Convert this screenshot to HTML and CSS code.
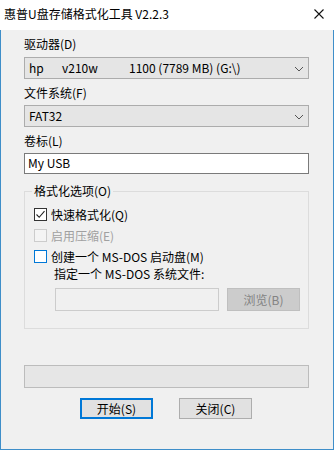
FILE: index.html
```html
<!DOCTYPE html>
<html lang="zh-CN">
<head>
    <meta charset="UTF-8">
    <meta name="viewport" content="width=device-width, initial-scale=1.0">
    <title>惠普U盘存储格式化工具 V2.2.3</title>
    <link rel="stylesheet" href="styles.css">
</head>
<body>
    <div class="window">
        <div class="titlebar">
            <span class="title">惠普U盘存储格式化工具 V2.2.3</span>
            <svg class="close" width="10" height="10" viewBox="0 0 10 10">
                <path d="M0.5 0.5 L9.5 9.5 M9.5 0.5 L0.5 9.5" stroke="#111" stroke-width="1.1" fill="none"/>
            </svg>
        </div>

        <div class="content">
            <div class="field-label first">驱动器(D)</div>
            <div class="combo">
                <span class="combo-text">
                    <span class="col-vendor">hp</span><span class="col-model">v210w</span><span>1100 (7789 MB) (G:\)</span>
                </span>
                <svg class="chevron" width="10" height="6" viewBox="0 0 10 6">
                    <path d="M1 1 L5 5 L9 1" stroke="#555" stroke-width="1" fill="none"/>
                </svg>
            </div>

            <div class="field-label">文件系统(F)</div>
            <div class="combo">
                <span class="combo-text">FAT32</span>
                <svg class="chevron" width="10" height="6" viewBox="0 0 10 6">
                    <path d="M1 1 L5 5 L9 1" stroke="#555" stroke-width="1" fill="none"/>
                </svg>
            </div>

            <div class="field-label">卷标(L)</div>
            <div class="textbox">My USB</div>

            <fieldset class="group">
                <legend>格式化选项(O)</legend>

                <div class="check-row">
                    <span class="checkbox checked">
                        <svg width="11" height="11" viewBox="0 0 11 11">
                            <path d="M1.5 5.5 L4.2 8.3 L9.5 2.2" stroke="#222" stroke-width="1.1" fill="none"/>
                        </svg>
                    </span>
                    <span>快速格式化(Q)</span>
                </div>

                <div class="check-row disabled">
                    <span class="checkbox"></span>
                    <span>启用压缩(E)</span>
                </div>

                <div class="check-row">
                    <span class="checkbox hover"></span>
                    <span>创建一个 MS-DOS 启动盘(M)</span>
                </div>

                <div class="sub-label">指定一个 MS-DOS 系统文件:</div>

                <div class="file-row">
                    <div class="file-input"></div>
                    <div class="btn btn-disabled">浏览(B)</div>
                </div>
            </fieldset>

            <div class="progress"></div>

            <div class="actions">
                <div class="btn btn-default">开始(S)</div>
                <div class="btn">关闭(C)</div>
            </div>
        </div>
    </div>
</body>
</html>
```

FILE: styles.css
```css
* {
    box-sizing: border-box;
}

body {
    margin: 0;
    font-family: "Noto Sans CJK SC", "Noto Sans", sans-serif;
    font-size: 12px;
    color: #000;
    background: #f0f0f0;
}

.window {
    width: 334px;
    height: 450px;
    display: flex;
    flex-direction: column;
}

.titlebar {
    height: 30px;
    background: #fff;
    display: flex;
    align-items: center;
    justify-content: space-between;
    padding: 0 10px 0 4px;
}

.title {
    font-size: 12px;
    line-height: 16px;
    margin-top: -2px;
}

.close {
    margin-top: -3px;
}

.content {
    flex: 1;
    background: #f0f0f0;
    border: 1px solid #3e8ec9;
    border-top: none;
    padding: 0 24px 0 23px;
}

.field-label {
    line-height: 16px;
    margin-top: 6px;
    margin-bottom: 4px;
}

.field-label.first {
    margin-top: 6px;
    margin-bottom: 5px;
}

.combo {
    height: 22px;
    background: #e5e5e5;
    border: 1px solid #acacac;
    display: flex;
    align-items: center;
    justify-content: space-between;
    padding: 0 4px 0 4px;
}

.combo-text {
    line-height: 16px;
    display: flex;
}

.col-vendor {
    width: 33px;
}

.col-model {
    width: 67px;
}

.chevron {
    margin-top: 1px;
}

.textbox {
    height: 21px;
    background: #fff;
    border: 1px solid #7a7a7a;
    line-height: 18px;
    padding-left: 3px;
}

.group {
    margin: 10px 0 0 0;
    padding: 8px 0 17px 0;
    border: 1px solid #dcdcdc;
}

.group legend {
    margin-left: 7px;
    padding: 0 2px;
    line-height: 14px;
}

.check-row {
    display: flex;
    align-items: center;
    height: 16px;
    margin-left: 9px;
    margin-bottom: 5px;
}

.checkbox {
    width: 13px;
    height: 13px;
    border: 1px solid #333;
    background: #fff;
    margin-right: 4px;
    display: flex;
    align-items: center;
    justify-content: center;
}

.check-row.disabled {
    color: #a0a0a0;
}

.check-row.disabled .checkbox {
    border-color: #cccccc;
    background: #f4f4f4;
}

.checkbox.hover {
    border-color: #0078d7;
}

.sub-label {
    line-height: 16px;
    margin: -3px 0 0 29px;
}

.file-row {
    display: flex;
    gap: 8px;
    margin: 6px 0 0 30px;
}

.file-input {
    width: 164px;
    height: 23px;
    border: 1px solid #cccccc;
    background: #f0f0f0;
}

.btn {
    width: 73px;
    height: 21px;
    background: #e1e1e1;
    border: 1px solid #adadad;
    display: flex;
    align-items: center;
    justify-content: center;
    line-height: 16px;
}

.btn-disabled {
    height: 23px;
    background: #cccccc;
    border-color: #bfbfbf;
    color: #838383;
}

.btn-default {
    border: 2px solid #0078d7;
}

.progress {
    height: 23px;
    margin-top: 36px;
    background: #e6e6e6;
    border: 1px solid #bcbcbc;
}

.actions {
    display: flex;
    gap: 26px;
    margin-top: 10px;
    padding-left: 56px;
}
```
